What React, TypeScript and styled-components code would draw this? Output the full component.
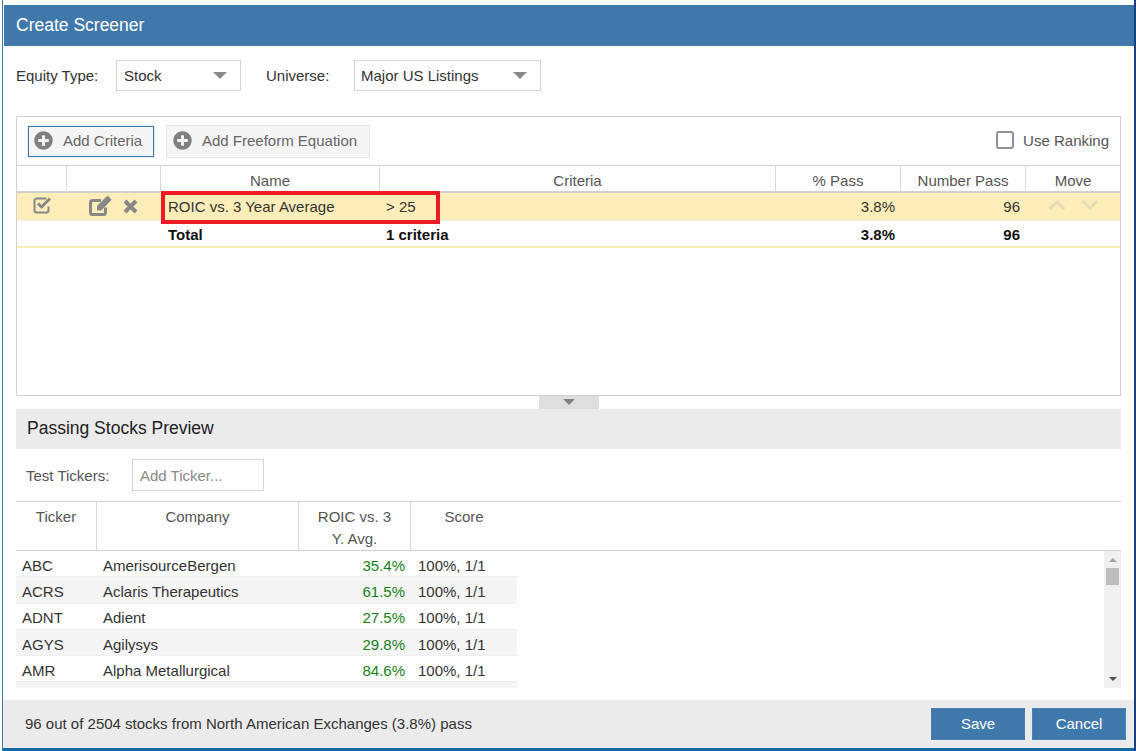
import React from 'react';
import styled, { createGlobalStyle } from 'styled-components';
import { FaPlusCircle } from 'react-icons/fa';

const GlobalStyle = createGlobalStyle`
  html, body {
    margin: 0;
    padding: 0;
    background: #fff;
    font-family: "Liberation Sans", Arial, sans-serif;
    font-size: 15px;
    color: #333;
  }
`;

const Window = styled.div`
  width: 1136px;
  height: 751px;
  box-sizing: border-box;
  padding: 5px 2px 3px 3px;
  display: flex;
  flex-direction: column;
  overflow: hidden;
  position: relative;
  background: #fff;
  box-shadow: inset 2px 0 0 #fff, inset 3px 0 0 #3f78ab, inset -2px 0 0 #1a3f86, inset 0 -3px 0 #0f6ca3;
`;

const TitleBar = styled.div`
  height: 41px;
  flex: none;
  margin-left: 1px;
  padding-left: 12px;
  display: flex;
  align-items: center;
  background: #3f78ab;
  color: #fff;
  font-size: 17.5px;
`;

const Body = styled.div`
  flex: 1;
  padding: 14px 13px 0;
  display: flex;
  flex-direction: column;
`;

const FilterRow = styled.div`
  height: 31px;
  display: flex;
  align-items: center;
  flex: none;
`;

const FilterLabel = styled.span<{ $width: number; $inset?: number }>`
  width: ${(p) => p.$width}px;
  padding-left: ${(p) => p.$inset ?? 0}px;
  box-sizing: border-box;
  flex: none;
  margin-top: -1px;
`;

const SelectBox = styled.div<{ $width: number; $inset: number }>`
  width: ${(p) => p.$width}px;
  height: 31px;
  box-sizing: border-box;
  flex: none;
  border: 1px solid #d4d4d4;
  padding: 0 13px 0 ${(p) => p.$inset}px;
  display: flex;
  align-items: center;
  justify-content: space-between;
`;

const Caret = styled.span`
  width: 0;
  height: 0;
  border-left: 7px solid transparent;
  border-right: 7px solid transparent;
  border-top: 7px solid #8a8a8a;
`;

const Panel = styled.div`
  position: relative;
  margin-top: 25px;
  height: 280px;
  box-sizing: border-box;
  flex: none;
  border: 1px solid #d0d0d0;
  display: flex;
  flex-direction: column;
`;

const Toolbar = styled.div`
  height: 48px;
  flex: none;
  padding: 0 11px 0 11px;
  display: flex;
  align-items: center;
  gap: 12px;
`;

const ToolButton = styled.div<{ $active?: boolean; $width: number }>`
  width: ${(p) => p.$width}px;
  height: ${(p) => (p.$active ? 31 : 33)}px;
  box-sizing: border-box;
  border: 1px solid ${(p) => (p.$active ? '#3f78ab' : '#e6e6e6')};
  box-shadow: ${(p) => (p.$active ? '0 0 0 1px #e3ecf4' : 'none')};
  background: #f5f5f5;
  color: #666;
  padding: 0 0 2px ${(p) => (p.$active ? 5 : 6)}px;
  display: flex;
  align-items: center;
  gap: 10px;
  svg {
    width: 19px;
    height: 19px;
    color: #808080;
  }
`;

const RankingToggle = styled.label`
  margin-left: auto;
  padding-bottom: 2px;
  display: flex;
  align-items: center;
  gap: 9px;
  color: #555;
`;

const CheckBox = styled.span`
  width: 18px;
  height: 18px;
  box-sizing: border-box;
  border: 2px solid #8f8f9d;
  border-radius: 3px;
  background: #fff;
`;

const criteriaColumns = '49px 94px 219px 396px 125px 125px 95px';

const CriteriaHead = styled.div`
  height: 28px;
  box-sizing: border-box;
  flex: none;
  display: grid;
  grid-template-columns: ${criteriaColumns};
  border-top: 1px solid #d0d0d0;
  border-bottom: 2px solid #d0d0d0;
`;

const HeadCell = styled.div`
  border-left: 1px solid #d8d8d8;
  text-align: center;
  line-height: 30px;
  color: #555;
  &:first-child {
    border-left: 0;
  }
`;

const CriteriaRow = styled.div<{ $total?: boolean }>`
  height: ${(p) => (p.$total ? 27 : 28)}px;
  box-sizing: border-box;
  padding-top: ${(p) => (p.$total ? 2 : 0)}px;
  flex: none;
  display: grid;
  grid-template-columns: ${criteriaColumns};
  align-items: center;
  background: ${(p) => (p.$total ? '#fff' : '#fdedb9')};
  border-bottom: ${(p) => (p.$total ? '2px solid #fcecb4' : '1px solid #eee')};
  color: ${(p) => (p.$total ? '#111' : '#333')};
  font-weight: ${(p) => (p.$total ? 700 : 400)};
`;

const CheckCell = styled.div`
  display: flex;
  padding-left: 16px;
  margin-top: -2px;
`;

const ActionCell = styled.div`
  display: flex;
  align-items: center;
  padding-left: 23px;
  gap: 11px;
  margin-top: -2px;
`;

const TextCell = styled.div<{ $inset: number }>`
  padding-left: ${(p) => p.$inset}px;
`;

const NumberCell = styled.div`
  padding-right: 5px;
  text-align: right;
`;

const MoveCell = styled.div`
  display: flex;
  padding-left: 23px;
  gap: 15px;
  margin-top: -3px;
`;

const Highlight = styled.div`
  position: absolute;
  left: 144px;
  top: 74px;
  width: 279px;
  height: 33px;
  box-sizing: border-box;
  border: 4px solid #ed1c24;
`;

const CollapseHandle = styled.div`
  align-self: center;
  width: 60px;
  height: 13px;
  flex: none;
  background: #dedede;
  display: flex;
  justify-content: center;
  padding-top: 3px;
  box-sizing: border-box;
`;

const HandleCaret = styled.span`
  width: 0;
  height: 0;
  border-left: 6px solid transparent;
  border-right: 6px solid transparent;
  border-top: 6px solid #808080;
`;

const PreviewTitle = styled.div`
  height: 40px;
  box-sizing: border-box;
  flex: none;
  padding: 0 0 2px 11px;
  display: flex;
  align-items: center;
  background: #ebebeb;
  color: #222;
  font-size: 17.5px;
`;

const TickerRow = styled.div`
  height: 52px;
  box-sizing: border-box;
  flex: none;
  padding: 10px 0 0 10px;
  display: flex;
  align-items: flex-start;
`;

const TickerLabel = styled.span`
  width: 106px;
  line-height: 33px;
  color: #555;
`;

const TickerInput = styled.div`
  width: 132px;
  height: 32px;
  box-sizing: border-box;
  border: 1px solid #d4d4d4;
  padding-left: 7px;
  line-height: 31px;
  color: #888;
`;

const previewColumns = '80px 202px 112px 107px';

const PreviewHead = styled.div`
  height: 50px;
  box-sizing: border-box;
  flex: none;
  display: grid;
  grid-template-columns: ${previewColumns};
  border-top: 1px solid #d0d0d0;
  border-bottom: 1px solid #d0d0d0;
`;

const PreviewHeadCell = styled.div`
  border-left: 1px solid #d8d8d8;
  text-align: center;
  line-height: 22px;
  padding-top: 4px;
  color: #555;
  &:first-child {
    border-left: 0;
  }
`;

const PreviewBody = styled.div`
  height: 137px;
  flex: none;
  display: flex;
  justify-content: space-between;
  overflow: hidden;
`;

const PreviewRows = styled.div`
  width: 501px;
`;

const PreviewRow = styled.div<{ $striped: boolean }>`
  height: 26.3px;
  box-sizing: border-box;
  padding-top: 3px;
  display: grid;
  grid-template-columns: ${previewColumns};
  align-items: center;
  background: ${(p) => (p.$striped ? '#f5f5f5' : '#fff')};
  border-bottom: 1px solid #eee;
  color: #333;
`;

const TickerCell = styled.div`
  padding-left: 6px;
`;

const CompanyCell = styled.div`
  padding-left: 7px;
`;

const ValueCell = styled.div`
  padding-right: 5px;
  text-align: right;
  color: #178017;
`;

const ScoreCell = styled.div`
  padding-left: 8px;
`;

const ScrollTrack = styled.div`
  width: 17px;
  flex: none;
  background: #f0f0f0;
  display: flex;
  flex-direction: column;
  align-items: center;
  padding-top: 7px;
  box-sizing: border-box;
`;

const ScrollUp = styled.span`
  width: 0;
  height: 0;
  border-left: 4px solid transparent;
  border-right: 4px solid transparent;
  border-bottom: 4px solid #a3a3a3;
`;

const ScrollThumb = styled.span`
  width: 13px;
  height: 17px;
  margin-top: 6px;
  background: #bdbdbd;
`;

const ScrollDown = styled.span`
  width: 0;
  height: 0;
  margin-top: auto;
  margin-bottom: 7px;
  border-left: 4px solid transparent;
  border-right: 4px solid transparent;
  border-top: 4px solid #505050;
`;

const Footer = styled.div`
  height: 48px;
  flex: none;
  padding: 0 8px 0 22px;
  display: flex;
  align-items: center;
  background: #ebebeb;
  color: #333;
`;

const FooterText = styled.span`
  margin-right: auto;
  margin-top: -2px;
`;

const FooterButton = styled.div`
  width: 94px;
  height: 32px;
  margin-left: 7px;
  padding-bottom: 2px;
  background: #3f78ab;
  border: 1px solid #4a80b0;
  box-sizing: border-box;
  display: flex;
  align-items: center;
  justify-content: center;
  color: #fff;
`;

const CloseSvg = styled.svg`
  margin-top: 2px;
`;

const CheckIcon = () => (
  <svg width="20" height="17" viewBox="0 0 20 17" fill="none">
    <path d="M13.5 1.5H3.5a2 2 0 0 0-2 2v10a2 2 0 0 0 2 2h10a2 2 0 0 0 2-2V9.5" stroke="#888" strokeWidth="2" />
    <path d="M5 6.5l3.5 3.5 8.5-8.5" stroke="#888" strokeWidth="3" />
  </svg>
);

const EditIcon = () => (
  <svg width="23" height="21" viewBox="0 0 23 21" fill="none">
    <path d="M12 5.5H3.5a2 2 0 0 0-2 2v10a2 2 0 0 0 2 2h11a2 2 0 0 0 2-2v-5" stroke="#888" strokeWidth="3" />
    <path d="M8 15.5v-4.5L18.5 .5l4.2 4.2L12.2 15.5z" fill="#888" />
  </svg>
);

const CloseIcon = () => (
  <CloseSvg width="15" height="15" viewBox="0 0 15 15" fill="none">
    <path d="M2 2l11 11M13 2L2 13" stroke="#888" strokeWidth="4" />
  </CloseSvg>
);

const UpIcon = () => (
  <svg width="18" height="10" viewBox="0 0 18 10" fill="none">
    <path d="M1.5 9L9 2l7.5 7" stroke="#e6dcb6" strokeWidth="3" />
  </svg>
);

const DownIcon = () => (
  <svg width="18" height="10" viewBox="0 0 18 10" fill="none">
    <path d="M1.5 1L9 8l7.5-7" stroke="#e6dcb6" strokeWidth="3" />
  </svg>
);

const stocks = [
  ['ABC', 'AmerisourceBergen', '35.4%'],
  ['ACRS', 'Aclaris Therapeutics', '61.5%'],
  ['ADNT', 'Adient', '27.5%'],
  ['AGYS', 'Agilysys', '29.8%'],
  ['AMR', 'Alpha Metallurgical', '84.6%'],
];

const App = () => (
  <Window>
    <GlobalStyle />
    <TitleBar>Create Screener</TitleBar>
    <Body>
      <FilterRow>
        <FilterLabel $width={100}>Equity Type:</FilterLabel>
        <SelectBox $width={125} $inset={7}>
          Stock
          <Caret />
        </SelectBox>
        <FilterLabel $width={113} $inset={25}>Universe:</FilterLabel>
        <SelectBox $width={187} $inset={6}>
          Major US Listings
          <Caret />
        </SelectBox>
      </FilterRow>

      <Panel>
        <Toolbar>
          <ToolButton $active $width={126}>
            <FaPlusCircle />
            Add Criteria
          </ToolButton>
          <ToolButton $width={204}>
            <FaPlusCircle />
            Add Freeform Equation
          </ToolButton>
          <RankingToggle>
            <CheckBox />
            Use Ranking
          </RankingToggle>
        </Toolbar>
        <CriteriaHead>
          <HeadCell />
          <HeadCell />
          <HeadCell>Name</HeadCell>
          <HeadCell>Criteria</HeadCell>
          <HeadCell>% Pass</HeadCell>
          <HeadCell>Number Pass</HeadCell>
          <HeadCell>Move</HeadCell>
        </CriteriaHead>
        <CriteriaRow>
          <CheckCell><CheckIcon /></CheckCell>
          <ActionCell>
            <EditIcon />
            <CloseIcon />
          </ActionCell>
          <TextCell $inset={8}>ROIC vs. 3 Year Average</TextCell>
          <TextCell $inset={7}>&gt; 25</TextCell>
          <NumberCell>3.8%</NumberCell>
          <NumberCell>96</NumberCell>
          <MoveCell>
            <UpIcon />
            <DownIcon />
          </MoveCell>
        </CriteriaRow>
        <CriteriaRow $total>
          <div />
          <div />
          <TextCell $inset={8}>Total</TextCell>
          <TextCell $inset={7}>1 criteria</TextCell>
          <NumberCell>3.8%</NumberCell>
          <NumberCell>96</NumberCell>
          <div />
        </CriteriaRow>
        <Highlight />
      </Panel>

      <CollapseHandle>
        <HandleCaret />
      </CollapseHandle>

      <PreviewTitle>Passing Stocks Preview</PreviewTitle>
      <TickerRow>
        <TickerLabel>Test Tickers:</TickerLabel>
        <TickerInput>Add Ticker...</TickerInput>
      </TickerRow>
      <PreviewHead>
        <PreviewHeadCell>Ticker</PreviewHeadCell>
        <PreviewHeadCell>Company</PreviewHeadCell>
        <PreviewHeadCell>
          ROIC vs. 3
          <br />
          Y. Avg.
        </PreviewHeadCell>
        <PreviewHeadCell>Score</PreviewHeadCell>
      </PreviewHead>
      <PreviewBody>
        <PreviewRows>
          {stocks.map(([ticker, company, value], i) => (
            <PreviewRow key={ticker} $striped={i % 2 === 1}>
              <TickerCell>{ticker}</TickerCell>
              <CompanyCell>{company}</CompanyCell>
              <ValueCell>{value}</ValueCell>
              <ScoreCell>100%, 1/1</ScoreCell>
            </PreviewRow>
          ))}
          <PreviewRow $striped />
        </PreviewRows>
        <ScrollTrack>
          <ScrollUp />
          <ScrollThumb />
          <ScrollDown />
        </ScrollTrack>
      </PreviewBody>
    </Body>
    <Footer>
      <FooterText>96 out of 2504 stocks from North American Exchanges (3.8%) pass</FooterText>
      <FooterButton>Save</FooterButton>
      <FooterButton>Cancel</FooterButton>
    </Footer>
  </Window>
);

export default App;
